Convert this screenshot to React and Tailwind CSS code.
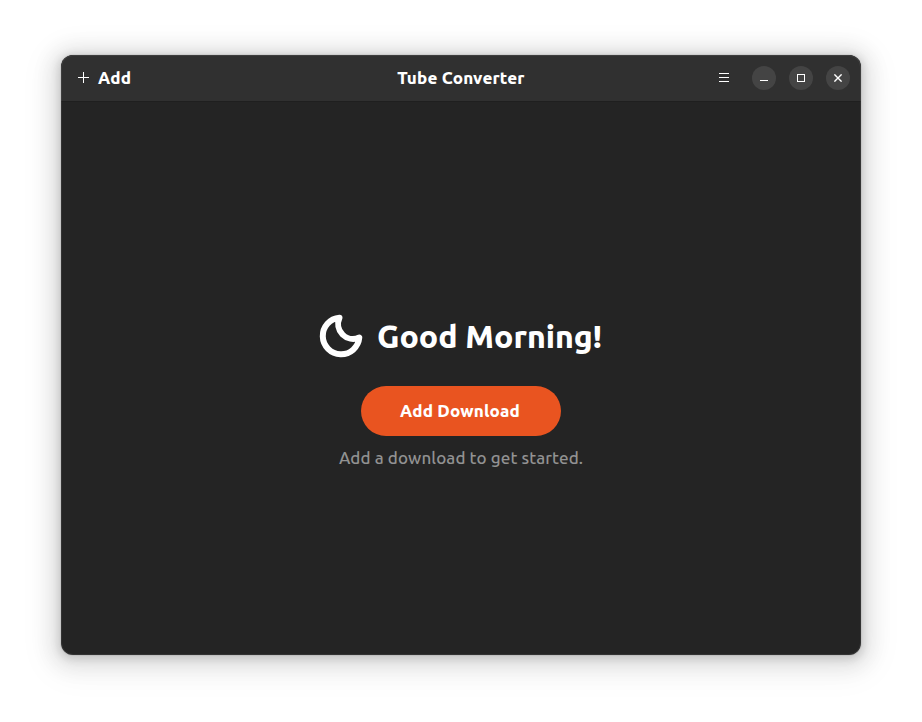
function WindowButton({ label, children }) {
  return (
    <button aria-label={label} className="flex size-6 items-center justify-center rounded-full bg-[#444444]">
      {children}
    </button>
  );
}

export default function App() {
  return (
    <div className="flex h-[722px] w-[922px] justify-center bg-white pt-[55px] font-['Ubuntu','Noto_Sans',sans-serif] text-white">
      <main className="relative flex h-[600px] w-[800px] flex-col overflow-hidden rounded-xl bg-[#242424] shadow-[0_2px_8px_2px_rgba(0,0,0,0.13),0_3px_20px_10px_rgba(0,0,0,0.09),0_6px_32px_16px_rgba(0,0,0,0.04),0_0_0_1px_rgba(0,0,0,0.05)]">
        <header className="grid h-[47px] shrink-0 grid-cols-[1fr_auto_1fr] items-center border-b border-[#1f1f1f] bg-[#303030] text-[17px] leading-6 font-extrabold tracking-[0.17px]">
          <button className="flex items-center gap-[9px] pl-[17px]">
            <svg className="mb-px size-[11px]" viewBox="0 0 11 11" stroke="currentColor" shapeRendering="crispEdges">
              <path d="M5.5 0v11M0 5.5h11" />
            </svg>
            Add
          </button>
          <h1>Tube Converter</h1>
          <div className="flex items-center justify-end gap-[13px] pr-[11px]">
            <button aria-label="Main menu" className="mb-px mr-[9px]">
              <svg className="h-[9px] w-[11px]" viewBox="0 0 11 9" stroke="currentColor" shapeRendering="crispEdges">
                <path d="M0 .5h10M0 4.5h10M0 8.5h10" />
              </svg>
            </button>
            <WindowButton label="Minimize">
              <span className="mt-[5px] h-px w-2 bg-white" />
            </WindowButton>
            <WindowButton label="Maximize">
              <span className="size-2 border border-white" />
            </WindowButton>
            <WindowButton label="Close">
              <svg className="size-2" viewBox="0 0 8 8" stroke="currentColor" strokeWidth="1.4">
                <path d="M.4.4l7.2 7.2M7.6.4L.4 7.6" />
              </svg>
            </WindowButton>
          </div>
        </header>
        <section className="flex flex-1 flex-col items-center pt-[212px]">
          <div className="flex items-center gap-[13px]">
            <svg className="size-11 overflow-visible" viewBox="0.7 0 44 44" fill="none" stroke="currentColor" strokeWidth="6" strokeLinejoin="round">
              <path d="M20.2 3.7A15 15 0 0 0 40 23.6A18.3 18.3 0 1 1 20.2 3.7Z" />
            </svg>
            <h2 className="text-[32px] leading-none font-extrabold">Good Morning!</h2>
          </div>
          <button className="mt-7 h-[50px] w-[200px] rounded-full bg-[#e95420] pr-[2px] text-[17px] font-extrabold tracking-[0.17px]">Add Download</button>
          <p className="mt-[10px] text-[17px] leading-6 font-[460] tracking-[0.1px] text-[#929292]">Add a download to get started.</p>
        </section>
        <div className="pointer-events-none absolute inset-0 rounded-xl border border-white/7" />
      </main>
    </div>
  );
}
